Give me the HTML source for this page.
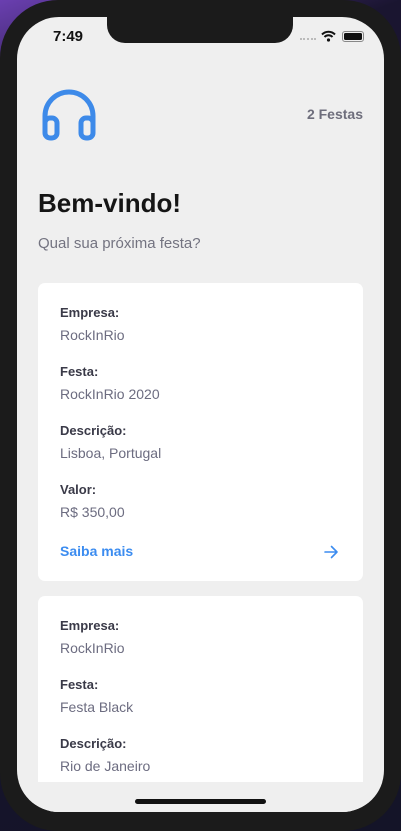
<!DOCTYPE html>
<html><head><meta charset="utf-8"><style>
*{margin:0;padding:0;box-sizing:border-box}
html,body{width:401px;height:831px;overflow:hidden}
body{background:linear-gradient(160deg,#6a3fb0 0%,#1a1530 15%,#141428 100%);font-family:"Liberation Sans",sans-serif;position:relative}
.frame{position:absolute;left:0;top:0;width:401px;height:831px;background:#1b1b1b;border-radius:58px}
.screen{position:absolute;left:17px;top:17px;width:367px;height:795px;background:#efefef;border-radius:42px;overflow:hidden}
.notch{position:absolute;left:90px;top:0;width:186px;height:26px;background:#1b1b1b;border-radius:0 0 18px 18px}
.time{position:absolute;left:36px;top:11px;font-size:15px;font-weight:bold;color:#111}
.card{position:absolute;left:21px;width:325px;background:#fff;border-radius:7px}
.l{position:absolute;left:22px;font-size:13px;font-weight:bold;color:#3a3a48}
.v{position:absolute;left:22px;font-size:14px;color:#6c6c80}
.home{position:absolute;left:118px;top:782px;width:131px;height:5px;border-radius:3px;background:#111}
</style></head><body>
<div class="frame"></div>
<div class="screen">
<div class="notch"></div>
<div class="time">7:49</div>
<div style="position:absolute;left:283px;top:21px;width:16px;height:2px;border-top:2px dotted #bbb"></div>
<svg style="position:absolute;left:304px;top:13px" width="15" height="12" viewBox="0 0 15 12"><path d="M1 4.5a9 9 0 0 1 13 0M3.5 7a5.5 5.5 0 0 1 8 0" stroke="#111" stroke-width="2" fill="none"/><circle cx="7.5" cy="10" r="1.6" fill="#111"/></svg>
<div style="position:absolute;left:325px;top:14px;width:22px;height:11px;border:1px solid #888;border-radius:3px;padding:1px"><div style="width:100%;height:100%;background:#111;border-radius:1.5px"></div></div>
<svg style="position:absolute;left:25px;top:71px" width="54" height="54" viewBox="0 0 54 54"><path d="M3 44V28a24 24 0 0 1 48 0v16" fill="none" stroke="#3d8ae9" stroke-width="5" stroke-linecap="round"/><rect x="3" y="30" width="12" height="20" rx="5" fill="none" stroke="#3d8ae9" stroke-width="5"/><rect x="39" y="30" width="12" height="20" rx="5" fill="none" stroke="#3d8ae9" stroke-width="5"/></svg>
<div style="position:absolute;right:21px;top:89px;font-size:14px;font-weight:bold;color:#6e6e7c">2 Festas</div>
<div style="position:absolute;left:21px;top:171px;font-size:26px;font-weight:bold;color:#151515">Bem-vindo!</div>
<div style="position:absolute;left:21px;top:218px;font-size:15px;color:#737380">Qual sua próxima festa?</div>
<div class="card" style="top:266px;height:298px">
<div class="l" style="top:22px">Empresa:</div><div class="v" style="top:44px">RockInRio</div>
<div class="l" style="top:81px">Festa:</div><div class="v" style="top:103px">RockInRio 2020</div>
<div class="l" style="top:140px">Descrição:</div><div class="v" style="top:162px">Lisboa, Portugal</div>
<div class="l" style="top:199px">Valor:</div><div class="v" style="top:221px">R$ 350,00</div>
<div style="position:absolute;left:22px;top:260px;font-size:14px;font-weight:bold;color:#3b8cf0">Saiba mais</div>
<svg style="position:absolute;left:286px;top:262px" width="15" height="14" viewBox="0 0 15 14"><path d="M1 7h12M7.5 1.5L13 7l-5.5 5.5" fill="none" stroke="#3b8cf0" stroke-width="1.6" stroke-linecap="round" stroke-linejoin="round"/></svg>
</div>
<div class="card" style="top:579px;height:200px">
<div class="l" style="top:22px">Empresa:</div><div class="v" style="top:44px">RockInRio</div>
<div class="l" style="top:81px">Festa:</div><div class="v" style="top:103px">Festa Black</div>
<div class="l" style="top:140px">Descrição:</div><div class="v" style="top:162px">Rio de Janeiro</div>
</div>
<div style="position:absolute;left:0;top:765px;width:367px;height:30px;background:#efefef"></div>
<div class="home"></div>
</div>
</body></html>
